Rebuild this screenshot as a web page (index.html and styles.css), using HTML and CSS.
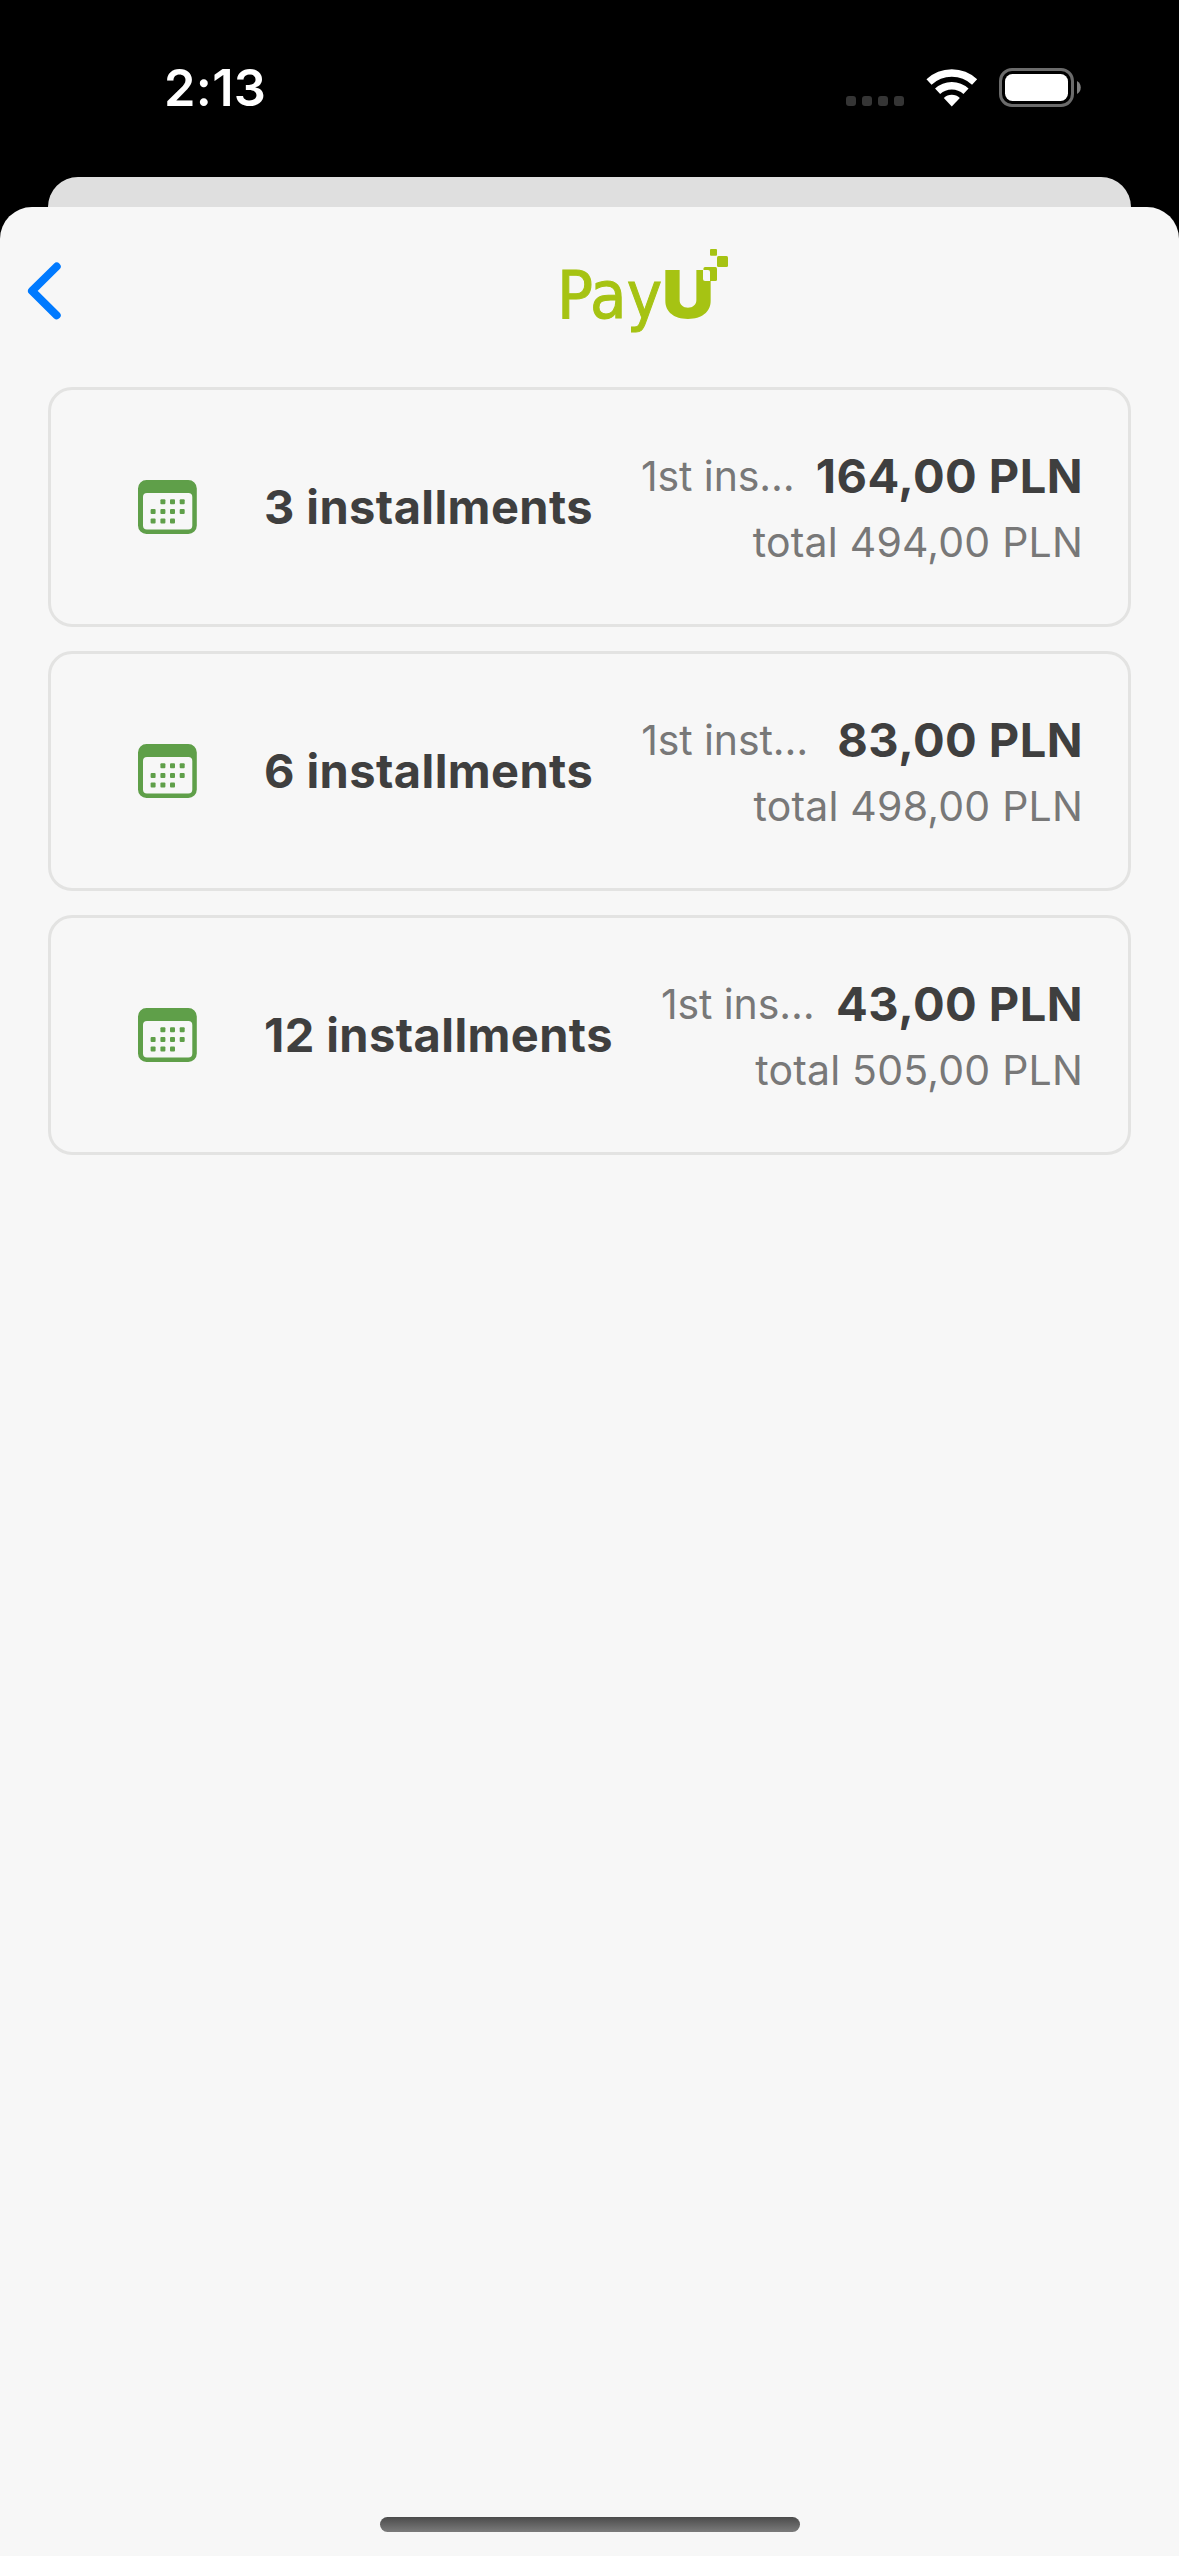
FILE: index.html
```html
<!DOCTYPE html>
<html lang="en">
<head>
<meta charset="utf-8">
<title>PayU installments</title>
<link rel="stylesheet" href="styles.css">
</head>
<body>
<svg class="defs" width="0" height="0" aria-hidden="true">
  <symbol id="calendar" viewBox="0 0 60 54">
    <path fill-rule="evenodd" d="M8.500 0H50.300a8.500 8.500 0 0 1 8.500 8.500V45.400a8.500 8.500 0 0 1-8.500 8.500H8.500a8.500 8.500 0 0 1-8.500-8.500V8.500a8.500 8.500 0 0 1 8.500-8.500zM9 13a4 4 0 0 0-4 4V45.500a4 4 0 0 0 4 4H50.300a4 4 0 0 0 4-4V17a4 4 0 0 0-4-4z"/>
    <g>
      <rect x="22.400" y="19.200" width="5" height="5" rx="1"/><rect x="32" y="19.200" width="5" height="5" rx="1"/><rect x="41.700" y="19.200" width="5" height="5" rx="1"/>
      <rect x="12.600" y="28.900" width="5" height="5" rx="1"/><rect x="22.400" y="28.900" width="5" height="5" rx="1"/><rect x="32" y="28.900" width="5" height="5" rx="1"/><rect x="41.700" y="28.900" width="5" height="5" rx="1"/>
      <rect x="12.600" y="38.500" width="5" height="5" rx="1"/><rect x="22.400" y="38.500" width="5" height="5" rx="1"/><rect x="32" y="38.500" width="5" height="5" rx="1"/>
    </g>
  </symbol>
</svg>

<header class="status-bar">
  <time class="clock">2:13</time>
  <div class="status-icons">
    <div class="signal"><i></i><i></i><i></i><i></i></div>
    <svg class="wifi" width="52" height="38" viewBox="0 0 52 38">
      <g fill="none" stroke="#fff" stroke-width="7.500">
        <path d="M3 13.100A33.400 33.400 0 0 1 48.600 13.100"/>
        <path d="M11.600 22.300A20.800 20.800 0 0 1 40 22.300"/>
      </g>
      <path fill="#fff" d="M25.800 37.500L17.800 29A11.800 11.800 0 0 1 33.800 29z"/>
    </svg>
    <svg class="battery" width="83" height="39" viewBox="0 0 83 39">
      <rect x="1.500" y="1.500" width="72" height="36" rx="11.500" fill="none" stroke="#6b6b6b" stroke-width="3"/>
      <rect x="6" y="6" width="63" height="27" rx="7.500" fill="#fff"/>
      <path d="M78 13a7.500 7.500 0 0 1 0 13z" fill="#808080"/>
    </svg>
  </div>
</header>

<div class="sheet-behind"></div>

<main class="sheet">
  <nav class="nav-bar">
    <svg class="back" width="36" height="60" viewBox="0 0 36 60">
      <path d="M29.700 5.500L5 29.900L29.700 54.300" fill="none" stroke="#007aff" stroke-width="8" stroke-linecap="round" stroke-linejoin="round"/>
    </svg>
    <svg class="logo" width="190" height="100" viewBox="-10 0 190 100">
      <text class="logo-pay" x="-3" y="72" textLength="105" lengthAdjust="spacingAndGlyphs">Pay</text>
      <text class="logo-u" x="102" y="72" textLength="52" lengthAdjust="spacingAndGlyphs">U</text>
      <rect x="143.500" y="21" width="13.500" height="14" rx="1.500"/>
      <path class="logo-gap" d="M143 24h5q2 0 2 2v9h-5q-2 0-2-2z"/>
      <rect x="150" y="3" width="7" height="6.700" rx="1"/>
      <rect x="157" y="10" width="11" height="11" rx="1.500"/>
    </svg>
  </nav>

  <section class="options">
    <article class="option">
      <svg class="calendar" width="60" height="54"><use href="#calendar"/></svg>
      <h2 class="title">3 installments</h2>
      <div class="costs">
        <div class="first"><span class="label">1st ins…</span><strong class="amount">164,00 PLN</strong></div>
        <p class="total">total 494,00 PLN</p>
      </div>
    </article>
    <article class="option">
      <svg class="calendar" width="60" height="54"><use href="#calendar"/></svg>
      <h2 class="title">6 installments</h2>
      <div class="costs">
        <div class="first"><span class="label">1st inst…</span><strong class="amount">83,00 PLN</strong></div>
        <p class="total">total 498,00 PLN</p>
      </div>
    </article>
    <article class="option">
      <svg class="calendar" width="60" height="54"><use href="#calendar"/></svg>
      <h2 class="title">12 installments</h2>
      <div class="costs">
        <div class="first"><span class="label">1st ins…</span><strong class="amount">43,00 PLN</strong></div>
        <p class="total">total 505,00 PLN</p>
      </div>
    </article>
  </section>

  <div class="home-indicator"></div>
</main>
</body>
</html>
```
FILE: styles.css
```css
* {
  box-sizing: border-box;
}

body {
  margin: 0;
  width: 1179px;
  height: 2556px;
  display: flex;
  flex-direction: column;
  overflow: hidden;
  background: #000;
  font-family: Inter, "Liberation Sans", sans-serif;
}

svg {
  display: block;
  flex: none;
}

.defs {
  display: none;
}

.status-bar {
  height: 177px;
  flex: none;
  display: flex;
  justify-content: space-between;
  align-items: flex-start;
  padding: 58px 97px 0 164px;
}

.clock {
  color: #fff;
  font-size: 50.500px;
  font-weight: 600;
  line-height: 60px;
  letter-spacing: 0.300px;
}

.status-icons {
  display: flex;
  padding-top: 10px;
}

.signal {
  display: flex;
  gap: 6px;
  padding-top: 28px;
  margin-right: 22px;
}

.signal i {
  width: 10px;
  height: 10px;
  border-radius: 3px;
  background: #353535;
}

.wifi {
  margin: 1px 21px 0 0;
}

.sheet-behind {
  height: 30px;
  flex: none;
  margin: 0 48px;
  border-radius: 30px 30px 0 0;
  background: #dfdfdf;
}

.sheet {
  flex: 1;
  display: flex;
  flex-direction: column;
  border-radius: 32px 32px 0 0;
  background: #f7f7f7;
}

.nav-bar {
  height: 180px;
  display: flex;
  align-items: flex-start;
  padding: 39px 0 0 27px;
}

.back {
  margin-top: 15px;
}

.logo {
  margin-left: 487px;
  fill: #a6c313;
}

.logo-pay {
  font: 66px "DejaVu Sans Condensed", "DejaVu Sans", sans-serif;
  stroke: #a6c313;
  stroke-width: 1px;
}

.logo-u {
  font-size: 66px;
  font-weight: 900;
}

.logo-gap {
  fill: #f7f7f7;
}

.options {
  flex: 1;
  display: flex;
  flex-direction: column;
  gap: 24px;
  padding: 0 48px;
}

.option {
  height: 240px;
  display: flex;
  align-items: center;
  padding: 0 45px 0 87px;
  border: 3px solid #e3e3e2;
  border-radius: 24px;
}

.calendar {
  fill: #5f9f49;
}

.title {
  margin: 0 0 0 66px;
  color: #3f3f3f;
  font-size: 47px;
  font-weight: 700;
  line-height: 60px;
  letter-spacing: 0.400px;
  white-space: nowrap;
}

.costs {
  flex: 1;
  padding-top: 4px;
  margin-left: 48px;
  color: #787878;
  font-size: 41px;
  line-height: 66px;
  white-space: nowrap;
}

.first {
  display: flex;
  justify-content: space-between;
  align-items: center;
}

.label {
  letter-spacing: -0.100px;
}

.amount {
  color: #3f3f3f;
  font-size: 47px;
  font-weight: 700;
  letter-spacing: 0.450px;
}

.total {
  margin: 0;
  text-align: right;
  letter-spacing: 0.200px;
}

.home-indicator {
  width: 420px;
  height: 15px;
  margin: 0 auto 24px;
  border-radius: 7.500px;
  background: linear-gradient(#4b4b4b, #7b7b7b);
}
```
